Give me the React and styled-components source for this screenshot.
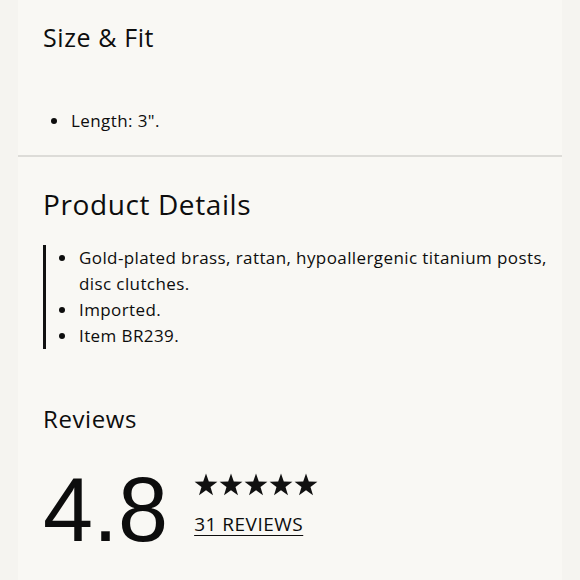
import React from 'react';
import styled, { createGlobalStyle } from 'styled-components';

const GlobalStyle = createGlobalStyle`
  html, body {
    margin: 0;
    padding: 0;
    background: #f5f4f0;
  }
  body {
    font-family: "Open Sans", Lato, sans-serif;
    color: #0d0d0d;
  }
`;

const Panel = styled.div`
  margin: 0 18px;
  min-height: 580px;
  background: #f9f8f4;
`;

const Section = styled.section`
  padding: ${p => p.$pad || '0 0 0 25px'};
  border-bottom: ${p => (p.$divider ? '2px solid #dddcd8' : 'none')};
`;

const Heading = styled.h2`
  margin: 0;
  font-weight: 400;
  font-size: ${p => p.$size || 24}px;
  line-height: 1.2;
  letter-spacing: 0.6px;
`;

const List = styled.ul`
  margin: ${p => p.$margin || '0'};
  padding: 0 0 0 ${p => p.$indent || 29}px;
  list-style: disc;
  font-size: 17px;
  line-height: 26px;
  letter-spacing: 0.4px;
  border-left: ${p => (p.$bar ? '3px solid #111' : 'none')};
`;

const Item = styled.li`
  padding-left: 1px;
`;

const Rating = styled.div`
  display: flex;
  align-items: flex-start;
  gap: 26px;
  margin-top: 32px;
`;

const Score = styled.div`
  font-family: "Liberation Sans", Arial, sans-serif;
  font-size: 90px;
  line-height: 1;
`;

const Meta = styled.div`
  display: flex;
  flex-direction: column;
  gap: 15px;
  padding-top: 8px;
`;

const Stars = styled.div`
  display: flex;
  gap: 1px;
`;

const ReviewLink = styled.a`
  font-size: 19px;
  color: #0d0d0d;
  letter-spacing: 0.5px;
  text-decoration: underline;
  text-underline-offset: 4px;
`;

function Star() {
  return (
    <svg width="24" height="23" viewBox="0 0 24 23">
      <path
        d="M12 0.5 L14.8 8.6 L23.4 8.7 L16.5 13.9 L19 22.2 L12 17.2 L5 22.2 L7.5 13.9 L0.6 8.7 L9.2 8.6 Z"
        fill="#111"
      />
    </svg>
  );
}

export default function App() {
  return (
    <>
      <GlobalStyle />
      <Panel>
        <Section $divider $pad="22px 0 21px 25px">
          <Heading $size={25}>Size &amp; Fit</Heading>
          <List $margin="56px 0 0" $indent={27}>
            <Item>Length: 3".</Item>
          </List>
        </Section>
        <Section $pad="31px 0 0 25px">
          <Heading $size={28}>Product Details</Heading>
          <List $bar $margin="23px 0 0" $indent={32}>
            <Item>Gold-plated brass, rattan, hypoallergenic titanium posts, disc clutches.</Item>
            <Item>Imported.</Item>
            <Item>Item BR239.</Item>
          </List>
        </Section>
        <Section $pad="56px 0 0 25px">
          <Heading>Reviews</Heading>
          <Rating>
            <Score>4.8</Score>
            <Meta>
              <Stars>
                {[0, 1, 2, 3, 4].map(i => <Star key={i} />)}
              </Stars>
              <ReviewLink href="#">31 REVIEWS</ReviewLink>
            </Meta>
          </Rating>
        </Section>
      </Panel>
    </>
  );
}
